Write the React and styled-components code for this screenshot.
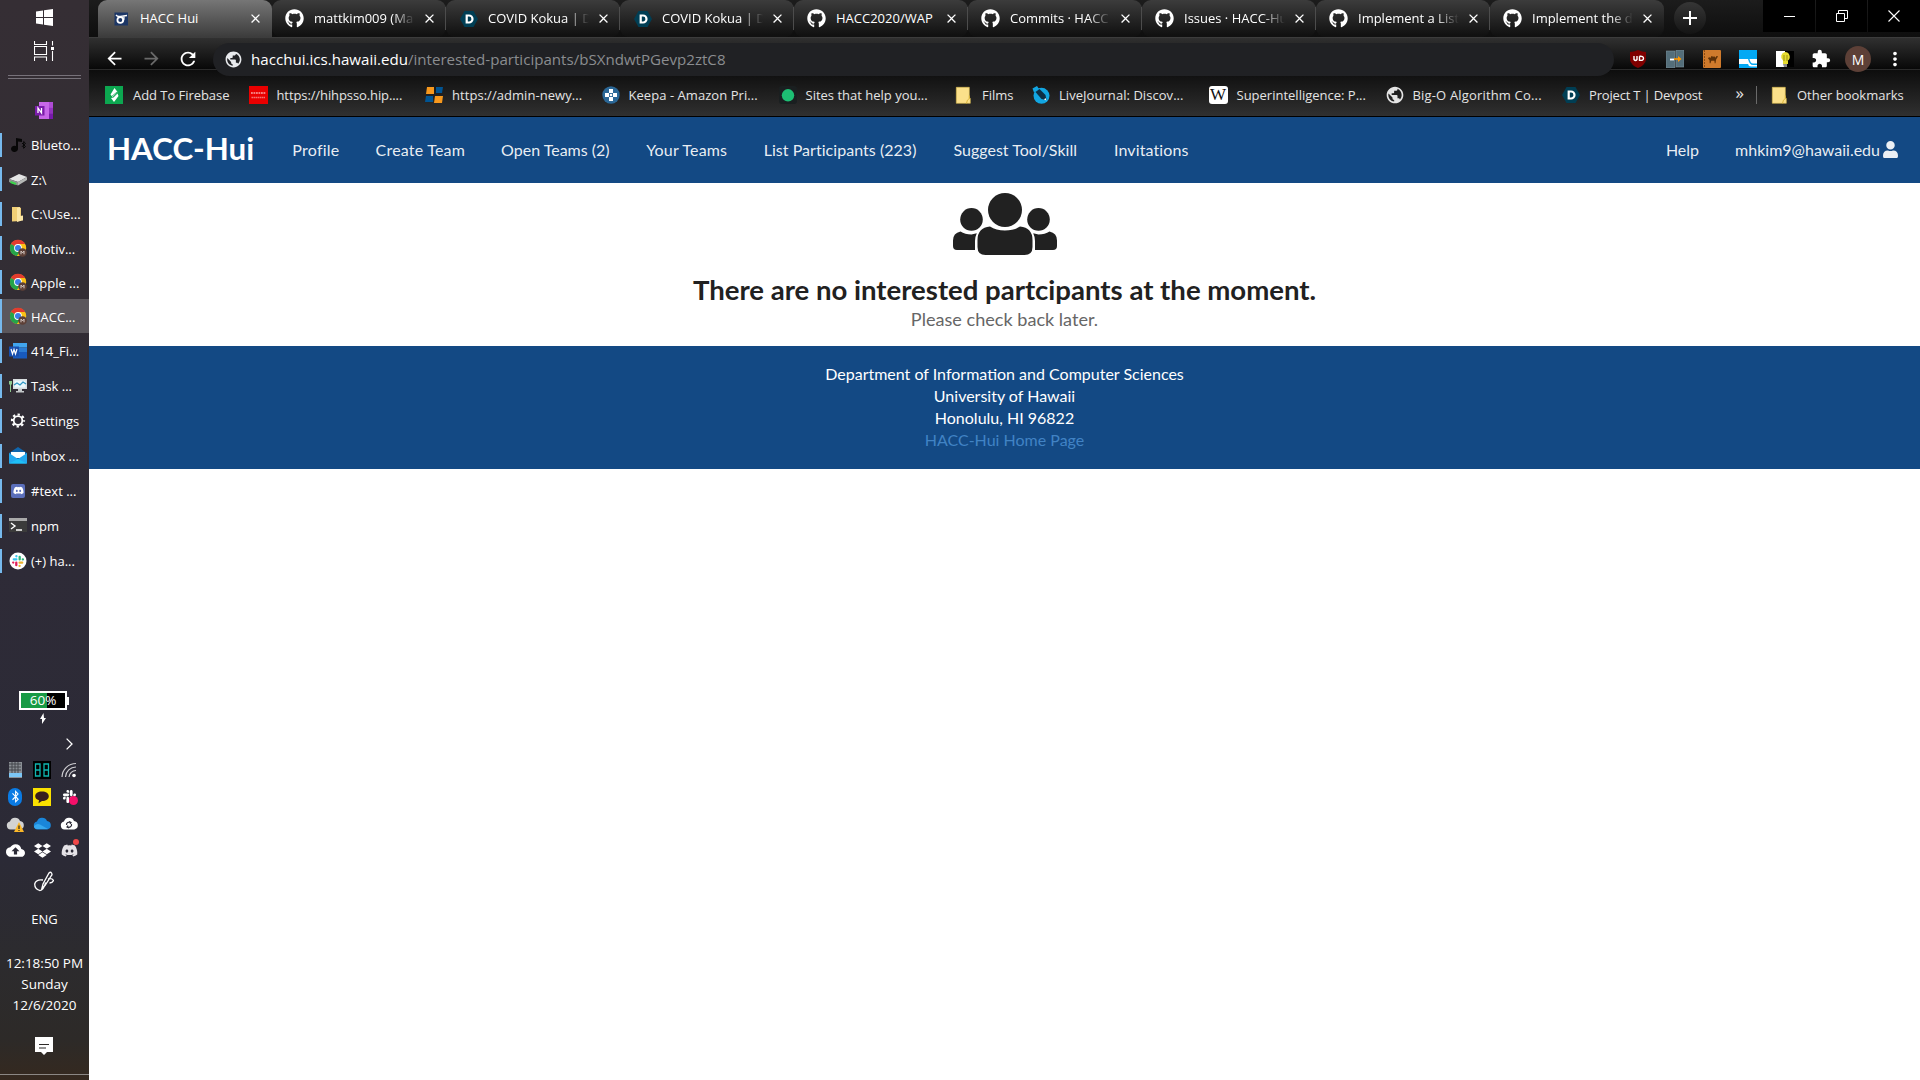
import React from "react";
import styled, { createGlobalStyle, css } from "styled-components";
import { FaGithub, FaUser, FaBluetoothB, FaDropbox, FaSlack, FaDiscord } from "react-icons/fa";
import { MdArrowBack, MdArrowForward, MdRefresh, MdPublic, MdClose, MdMoreVert, MdExtension, MdCloudUpload } from "react-icons/md";

const Global = createGlobalStyle`
  * { box-sizing: border-box; }
  html, body { margin: 0; height: 100%; background: #fff; overflow: hidden; }
  svg { display: block; flex: none; }
`;

const ui = css`
  font-family: "Open Sans", "Noto Sans", sans-serif;
`;

const Screen = styled.div`
  display: flex;
  width: 1920px;
  height: 1080px;
  overflow: hidden;
`;

/* ---------- Taskbar ---------- */
const Taskbar = styled.aside`
  ${ui}
  width: 89px;
  flex: none;
  display: flex;
  flex-direction: column;
  align-items: center;
  color: #fff;
  font-size: 13px;
  background: linear-gradient(#352e34 0, #322d34 300px, #2e2b37 560px, #2b2a36 860px, #2c2b2e 960px, #2d2a28 1040px, #35291f 1080px);
`;
const StartArea = styled.div`
  height: 127px;
  display: flex;
  flex-direction: column;
  align-items: center;
  padding: 9px 1px 0 0;
`;
const TaskViewSlot = styled.div`
  margin-top: 15px;
`;
const Grip = styled.div`
  width: 73px;
  height: 4px;
  margin-top: 14px;
  border-top: 1px solid #77727a;
  border-bottom: 1px solid #77727a;
`;
const PinnedSlot = styled.div`
  margin-top: 23px;
`;
const Task = styled.div`
  width: 89px;
  height: ${(p) => p.$h}px;
  flex: none;
  display: flex;
  align-items: center;
  background: ${(p) => (p.$active ? "#5b575c" : "transparent")};
`;
const Stripe = styled.div`
  width: 2px;
  height: ${(p) => (p.$active ? "34px" : "24px")};
  background: #76b9ed;
  margin-right: 7px;
`;
const TaskLabel = styled.span`
  margin: 1px 0 0 4px;
  white-space: nowrap;
`;
const Battery = styled.div`
  margin: 113px 0 0 -3px;
  width: 48px;
  height: 19px;
  border: 2px solid #fff;
  background: linear-gradient(90deg, #189a45 60%, #000 60%);
  text-align: center;
  line-height: 15px;
  font-size: 13.5px;
  position: relative;
  &::after {
    content: "";
    position: absolute;
    right: -4px;
    top: 4px;
    width: 2px;
    height: 8px;
    background: #fff;
  }
`;
const Bolt = styled.div`
  margin: 3px 0 0 -3px;
`;
const Chevron = styled.div`
  margin: 14px 0 0 50px;
`;
const Tray = styled.div`
  margin-top: 6px;
  margin-left: -5px;
  display: grid;
  grid-template-columns: repeat(3, 27px);
  grid-auto-rows: 27px;
  place-items: center;
`;
const PenSlot = styled.div`
  margin: 7px 0 0 -2px;
`;
const Lang = styled.div`
  margin-top: 17px;
  line-height: 20px;
`;
const Clock = styled.div`
  margin-top: 24px;
  font-size: 13.5px;
  line-height: 21px;
  text-align: center;
  white-space: nowrap;
`;
const NoteSlot = styled.div`
  margin: 21px 0 0 -2px;
`;
const Edge = styled.div`
  width: 89px;
  height: 1px;
  margin-top: 19px;
  background: #8b8784;
`;

/* ---------- Browser ---------- */
const Browser = styled.main`
  flex: 1;
  min-width: 0;
  display: flex;
  flex-direction: column;
`;
const TabStrip = styled.div`
  ${ui}
  height: 37px;
  display: flex;
  padding-left: 9px;
  background: linear-gradient(#1c1c1c, #0e0e0e);
`;
const Tab = styled.div`
  width: 174px;
  height: 37px;
  flex: none;
  display: flex;
  align-items: center;
  padding-left: 13px;
  color: #fff;
  font-size: 13px;
  border-radius: ${(p) => (p.$active ? "9px 9px 0 0" : "9px")};
  background: ${(p) => (p.$active ? "linear-gradient(#767676, #3c3c3c)" : "linear-gradient(#3c3c3c, #111 95%)")};
`;
const TabIcon = styled.div`
  width: 19px;
  display: grid;
  place-items: center;
`;
const TabTitle = styled.div`
  width: 103px;
  margin: 0 5px 1px 10px;
  white-space: nowrap;
  ${(p) => p.$fade && "mask-image: linear-gradient(90deg, #000 78px, transparent 101px);"}
`;
const TabDivider = styled.div`
  width: 1px;
  height: 23px;
  margin-left: 8px;
  background: ${(p) => (p.$hidden ? "transparent" : "#4c4c4c")};
`;
const NewTab = styled.div`
  width: 32px;
  height: 32px;
  margin: 2px 0 0 10px;
  border-radius: 50%;
  background: linear-gradient(#363636, #141414);
  display: grid;
  place-items: center;
`;
const WindowButtons = styled.div`
  margin-left: auto;
  display: flex;
  gap: 1px;
  height: 32px;
`;
const WinButton = styled.div`
  width: 51.6px;
  background: #000;
  display: grid;
  place-items: center;
`;
const Toolbar = styled.div`
  ${ui}
  height: 33px;
  flex: none;
  display: flex;
  align-items: flex-start;
  color: #fff;
  padding: 6px 0 0 13px;
  border-bottom: 1px solid #2b2b2b;
  background: linear-gradient(#484848 0, #303030 1px, #080808 32px);
`;
const NavButton = styled.div`
  height: 31px;
  width: 36.7px;
  padding-left: 2px;
  display: flex;
  align-items: center;
  color: ${(p) => (p.$dim ? "#6a6a6a" : "#fff")};
`;
const Address = styled.div`
  height: 33px;
  width: 1401px;
  flex: none;
  margin-left: 1px;
  border-radius: 17px;
  background: #202124;
  display: flex;
  align-items: center;
  padding-left: 11px;
  font-size: 15.1px;
  color: #8b8d90;
  white-space: nowrap;
  position: relative;
`;
const Url = styled.span`
  margin: 0 0 1px 8px;
  b { font-weight: 400; color: #fff; }
`;
const Extensions = styled.div`
  height: 32px;
  display: grid;
  grid-template-columns: repeat(8, 36.6px);
  place-items: center;
  margin-left: 6px;
`;
const Avatar = styled.div`
  width: 26px;
  height: 26px;
  border-radius: 50%;
  background: #5d4037;
  display: grid;
  place-items: center;
  font-size: 14px;
  position: relative;
`;
const Bookmarks = styled.div`
  ${ui}
  height: 47px;
  flex: none;
  display: flex;
  align-items: center;
  padding: 3px 16px 0 16px;
  color: #e4e4e4;
  font-size: 13px;
  border-bottom: 1px solid #000;
  background: linear-gradient(#0d0d0d, #303030);
`;
const Bookmark = styled.div`
  display: flex;
  align-items: center;
  gap: ${(p) => p.$gap || 9}px;
  width: ${(p) => p.$w}px;
  flex: none;
  white-space: nowrap;
  letter-spacing: ${(p) => p.$track || 0}px;
`;
const More = styled.div`
  margin: 0 13px 0 auto;
  display: flex;
  align-items: center;
  gap: 12px;
  font-size: 17px;
  line-height: 18px;
  span { margin-top: -4px; }
`;
const Rule = styled.div`
  width: 1px;
  height: 18px;
  flex: none;
  background: #6a6a6a;
`;

/* ---------- Site ---------- */
const Site = styled.div`
  flex: 1;
  font-family: Lato, sans-serif;
  font-size: 16px;
  line-height: 22px;
  background: #fff;
`;
const NavBar = styled.nav`
  height: 66px;
  display: flex;
  align-items: center;
  padding: 0 21px 0 18px;
  background: #134984;
  color: rgba(255, 255, 255, 0.92);
  white-space: nowrap;
`;
const Brand = styled.div`
  width: 185.3px;
  font-size: 31.3px;
  font-weight: 700;
  color: #fff;
  margin-top: -5px;
`;
const NavItem = styled.span`
  width: ${(p) => p.$w}px;
  letter-spacing: ${(p) => p.$track}px;
`;
const NavRight = styled.div`
  margin-left: auto;
  display: flex;
  gap: 36px;
`;
const Account = styled.div`
  display: flex;
  align-items: center;
  gap: 2px;
  svg { margin-top: -2px; }
`;
const Empty = styled.section`
  height: 163px;
  display: flex;
  flex-direction: column;
  align-items: center;
  padding-top: 10px;
`;
const Title = styled.h2`
  margin: 17px 0 0;
  font-size: 27.55px;
  line-height: 36px;
  color: #212121;
`;
const Sub = styled.div`
  font-size: 18.1px;
  line-height: 21px;
  color: #666;
  margin-top: 1px;
`;
const Footer = styled.footer`
  height: 123px;
  background: #134984;
  color: #fff;
  text-align: center;
  padding-top: 17px;
  a { color: #4183c4; display: block; }
`;

/* ---------- Icons ---------- */
const UsersIcon = () => (
  <svg width="104" height="62" viewBox="0 0 104 62" fill="#212121">
    <circle cx="52" cy="17" r="17" />
    <circle cx="18.500" cy="26.400" r="11.300" />
    <circle cx="85.500" cy="26.400" r="11.300" />
    <path d="M37 33.6Q43 37.5 52 37.5Q61 37.5 67 33.6Q79.500 35 79.500 47V54Q79.500 62 71.500 62H32.500Q24.500 62 24.500 54V47Q24.500 35 37 33.600Z" />
    <path d="M7.500 38.500Q12 41.500 18.500 41.500L23.800 40.300Q22 44 22 48V57H4Q0 57 0 53V47.500Q0 40 7.500 38.500Z" />
    <path d="M96.500 38.500Q92 41.500 85.500 41.500L80.200 40.300Q82 44 82 48V57H100Q104 57 104 53V47.500Q104 40 96.500 38.500Z" />
  </svg>
);
const DevpostIcon = () => (
  <svg width="18" height="18" viewBox="0 0 18 18">
    <path d="M4.500 1h9L18 9l-4.500 8h-9L0 9z" fill="#003e54" />
    <path d="M6.700 5.500H9a3.500 3.500 0 010 7H6.700z" fill="none" stroke="#fff" strokeWidth="2.200" />
  </svg>
);
const HaccIcon = () => (
  <svg width="18" height="18" viewBox="0 0 18 18">
    <rect x="2.500" y="2.500" width="13.500" height="13" fill="#1d3766" />
    <circle cx="8.300" cy="10" r="2.900" fill="none" stroke="#fff" strokeWidth="1.800" />
    <path d="M4 5q1.500 2 4.500 1.300L15 5.500M12 6.500q.5 3-1.500 5" stroke="#fff" strokeWidth="1.300" fill="none" />
  </svg>
);
const FirebaseAddIcon = () => (
  <svg width="18" height="18" viewBox="0 0 18 18">
    <rect width="18" height="18" fill="#0ca750" />
    <path d="M9.500 2l3 4-5 5-2-2.500zM12.500 7.500l1 2.500-4.500 6-3-4 2.500-.5z" fill="#fff" />
    <path d="M6 11l6-5" stroke="#0ca750" strokeWidth=".8" />
  </svg>
);
const OracleIcon = () => (
  <svg width="19" height="18" viewBox="0 0 19 18">
    <rect width="19" height="18" fill="#ea0000" />
    <path d="M2 7h15" stroke="#fff" strokeWidth="1.300" strokeDasharray="1.800 .7" opacity=".65" />
    <path d="M2.500 11.500h14" stroke="#fff" strokeWidth="1.300" strokeDasharray="1.400 .6" opacity=".5" />
  </svg>
);
const SquaresIcon = () => (
  <svg width="18" height="18" viewBox="0 0 18 18">
    <path d="M2 1h7v7H1z" fill="#f7981d" /><path d="M11 1h7l-1 6h-6z" fill="#005493" />
    <path d="M1 10h7v6H0z" fill="#005493" /><path d="M10 10h8l-1 7h-8z" fill="#f7981d" />
  </svg>
);
const KeepaIcon = () => (
  <svg width="18" height="18" viewBox="0 0 18 18">
    <circle cx="9" cy="9" r="8.700" fill="#2b6796" />
    <path d="M7 3h4v4h4v4h-4v4H7v-4H3V7h4z" fill="#fff" /><path d="M7 7h4v4H7z" fill="#2b6796" />
    <circle cx="9" cy="9" r="1.300" fill="#fff" />
  </svg>
);
const GreenDot = () => (
  <svg width="18" height="18" viewBox="0 0 18 18">
    <rect width="18" height="18" rx="3" fill="#1a1f20" /><circle cx="9" cy="9.300" r="6.200" fill="#1dbf73" />
  </svg>
);
const FolderIcon = () => (
  <svg width="18" height="18" viewBox="0 0 18 18">
    <path d="M2.300 1.300h13v11h1v5h-14z" fill="#fbe08a" stroke="#dcbc4c" strokeWidth=".6" />
    <path d="M12.500 17.300q.5-4 2.800-4.800v-3" stroke="#dcb73c" fill="none" />
  </svg>
);
const LiveJournalIcon = () => (
  <svg width="18" height="18" viewBox="0 0 18 18">
    <circle cx="9.500" cy="9.800" r="8" fill="#12a6e2" /><path d="M.5 2.500L5 0l2 3-5 3.500z" fill="#12a6e2" />
    <path d="M3.500 6l4-3 6 6 1 5-5-1z" fill="#0e2f45" />
    <path d="M12 13.500l1.500-1.500 1 2.500z" fill="#fff" />
  </svg>
);
const Wiki = styled.div`
  width: 19px;
  height: 18px;
  border-radius: 3px;
  background: #fff;
  color: #111;
  font: 17px/18px "Liberation Serif", serif;
  text-align: center;
`;
const WindowsIcon = () => (
  <svg width="17" height="17" viewBox="0 0 17 17" fill="#fff">
    <path d="M0 2.400l7-1v6.700H0zM8 1.200L17 0v8.100H8zM0 9.100h7v6.500l-7-1zM8 9.100h9V17l-9-1.300z" />
  </svg>
);
const TaskViewIcon = () => (
  <svg width="20" height="20" viewBox="0 0 20 20" fill="none" stroke="#fff" strokeWidth="1.100">
    <path d="M.5 0v3.500h12V0M.5 5.500h12v8H.5zM.5 20v-4h12v4M18.500 0v4.500M18.500 10v10" />
    <path d="M17 6h3v3h-3z" fill="#fff" stroke="none" />
  </svg>
);
const OneNoteIcon = () => (
  <svg width="18" height="17" viewBox="0 0 18 17">
    <path d="M4 0h14v17H4z" fill="#c767e8" /><path d="M14 0h4v5.600h-4z" fill="#ae4bd5" />
    <path d="M14 5.600h4v5.700h-4z" fill="#9332bf" /><path d="M14 11.300h4V17h-4z" fill="#7719aa" />
    <path d="M0 4h9.500v9.500H0z" fill="#7a1caa" /><path d="M3 11V6l3.500 5V6" fill="none" stroke="#fff" strokeWidth="1.300" />
  </svg>
);
const taskIcons = {
  music: <><path d="M7 2l6 1v3l-4-.5V13a3.500 3.200 0 11-2-3z" fill="#070707" /><path d="M13 7l3.500 3.500-1.800 1.800V5.500l1.800 1.800L13 10.800" stroke="#070707" fill="none" /></>,
  drive: <><path d="M0 9l10-5 8 3-9 5z" fill="#e4e4e4" /><path d="M0 9l9 3v3.500L0 12z" fill="#8f9592" /><path d="M9 12l9-5v3l-9 5.500z" fill="#b5b7b5" /><path d="M1.500 12l5.500 2" stroke="#3bd34b" strokeWidth="2" /></>,
  folder: <><path d="M3 2h7l2 1v13l-9 .5z" fill="#f1cf76" /><path d="M8 3l3-1v14l-3 1zM11 11l3-.5v5L11 16z" fill="#fbe6a5" /></>,
  chrome: <><circle cx="9" cy="9" r="8" fill="#e8a917" /><path d="M9 9L2 5A8 8 0 0116 5z" fill="#e33b2e" /><path d="M9 9L2 5a8 8 0 006 12l3-5z" fill="#25a44a" /><path d="M9 5h7A8 8 0 018 17l4-6z" fill="#fbc116" /><circle cx="9" cy="9" r="3.900" fill="#fff" /><circle cx="9" cy="9" r="3" fill="#3c7de6" /><circle cx="13.500" cy="13.500" r="4.300" fill="#5d4037" /><path d="M12 15.300v-3.200l1.500 1.700 1.500-1.700v3.200" stroke="#e6dcd8" strokeWidth=".9" fill="none" /></>,
  word: <><path d="M4 1h14v4.500H4z" fill="#41a5ee" /><path d="M4 5.500h14V10H4z" fill="#2b7cd3" /><path d="M4 10h14v6.500H4z" fill="#185abd" /><path d="M0 4.500h10v10H0z" fill="#184fae" /><path d="M2 7l1.500 5L5 7.500 6.500 12 8 7" stroke="#fff" strokeWidth="1.200" fill="none" /></>,
  task: <><path d="M4 2h14v10H4z" fill="#d8dde0" /><path d="M5.500 3.500h11v7h-11z" fill="#e9f7fc" /><path d="M5 8l3-2 3 2 3-3 3 2" stroke="#3197c4" fill="none" strokeWidth="1.300" /><path d="M9 12h4v2h2v1.500H7V14h2z" fill="#c5c9cb" /><path d="M0 4h3v3l-1 1v7H1V8L0 7z" fill="#8ec78f" /></>,
  gear: <g fill="none" stroke="#fff"><circle cx="9" cy="8.500" r="4.300" strokeWidth="1.800" /><circle cx="9" cy="8.500" r="6" strokeWidth="2.200" strokeDasharray="2.356 2.356" strokeDashoffset="1.178" /></g>,
  mail: <><path d="M0 6l9-6 9 6v10H0z" fill="#1066ad" /><path d="M2 5h14v6H2z" fill="#fff" /><path d="M0 6l9 6 9-6v10.500H0z" fill="#24a8ee" /><path d="M0 16.500L9 12l9 4.500z" fill="#1ec0f7" /></>,
  terminal: <><path d="M0 1h18v14H0z" fill="#3b3b3b" /><path d="M0 1h18v3H0z" fill="#a9a9a9" /><path d="M2 6l4 3-4 3M7 13h6" stroke="#fff" strokeWidth="1.400" fill="none" /></>,
  slack: <><circle cx="9" cy="9" r="8.500" fill="#fff" /><g fill="none" strokeWidth="2.300" strokeLinecap="round"><path d="M4.800 7.300h2.600M7.400 4.200v.1" stroke="#36c5f0" /><path d="M10.700 4.800v2.600M13.800 7.400h.1" stroke="#2eb67d" /><path d="M13.200 10.700h-2.600M10.600 13.800v.1" stroke="#ecb22e" /><path d="M7.300 13.200v-2.600M4.200 10.600h.1" stroke="#e01e5a" /></g></>,
};
const DiscordBox = styled.div`
  width: 14px;
  height: 14px;
  border-radius: 2px;
  background: #5b6fbb;
  color: #fff;
  display: grid;
  place-items: center;
`;
const TaskIcon = ({ name }) =>
  name === "discord" ? (
    <DiscordBox><FaDiscord size={11} /></DiscordBox>
  ) : (
    <svg width="18" height="18" viewBox="0 0 18 18">{taskIcons[name]}</svg>
  );
const IconSlot = styled.div`
  width: 18px;
  height: 20px;
  display: grid;
  place-items: center;
`;

const CloudShape = ({ fill }) => <path d="M4.500 14.500A4 4 0 014 6.600 5.300 5.300 0 0114 6a4.300 4.300 0 01.3 8.500z" fill={fill} />;
const Svg18 = ({ children }) => <svg width="18" height="18" viewBox="0 0 18 18">{children}</svg>;
const Kakao = styled.div`
  width: 18px;
  height: 18px;
  background: #fae100;
  display: grid;
  place-items: center;
`;
const BlueRound = styled.div`
  width: 14px;
  height: 18px;
  border-radius: 7px;
  background: #0a7be4;
  display: grid;
  place-items: center;
`;
const Badged = styled.div`
  position: relative;
  &::after {
    content: "";
    position: absolute;
    width: ${(p) => p.$s}px;
    height: ${(p) => p.$s}px;
    border-radius: 50%;
    background: ${(p) => p.$c};
    right: -1px;
    ${(p) => (p.$top ? "top: -3px" : "bottom: -1px")};
  }
`;

const tasks = [
  ["music", "Blueto...", 35], ["drive", "Z:\\", 34], ["folder", "C:\\Use...", 35], ["chrome", "Motiv...", 34],
  ["chrome", "Apple ...", 34], ["chrome", "HACC...", 34, true], ["word", "414_Fi...", 35], ["task", "Task ...", 35],
  ["gear", "Settings", 35], ["mail", "Inbox ...", 35], ["discord", "#text ...", 35], ["terminal", "npm", 35], ["slack", "(+) ha...", 35],
];
const tabs = [
  ["hacc", "HACC Hui"], ["gh", "mattkim009 (Ma", true], ["dev", "COVID Kokua | D", true], ["dev", "COVID Kokua | D", true],
  ["gh", "HACC2020/WAP"], ["gh", "Commits · HACC", true], ["gh", "Issues · HACC-Hu", true], ["gh", "Implement a List", true], ["gh", "Implement the d", true],
];
const tabIcon = { hacc: <HaccIcon />, gh: <FaGithub size={19} />, dev: <DevpostIcon /> };
const marks = [
  [<FirebaseAddIcon />, "Add To Firebase", 143.5, -0.05, 10], [<OracleIcon />, "https://hihpsso.hip....", 176.5, -0.1],
  [<SquaresIcon />, "https://admin-newy...", 176.5, 0.05], [<KeepaIcon />, "Keepa - Amazon Pri...", 177, 0.05],
  [<GreenDot />, "Sites that help you...", 175.5, 0], [<FolderIcon />, "Films", 78, 0, 10],
  [<LiveJournalIcon />, "LiveJournal: Discov...", 176.5, 0.05], [<Wiki>W</Wiki>, "Superintelligence: P...", 176, 0],
  [<MdPublic size={20} />, "Big-O Algorithm Co...", 177.5, 0.17, 8], [<DevpostIcon />, "Project T | Devpost", 150, -0.18],
];
const links = [
  ["Profile", 83.3, 0.25], ["Create Team", 125.5, 0.2], ["Open Teams (2)", 145.1, 0], ["Your Teams", 117.5, 0.17],
  ["List Participants (223)", 189.9, 0.04], ["Suggest Tool/Skill", 160.4, 0], ["Invitations", 90, 0.12],
];

export default function App() {
  return (
    <Screen>
      <Global />
      <Taskbar>
        <StartArea>
          <WindowsIcon />
          <TaskViewSlot><TaskViewIcon /></TaskViewSlot>
          <Grip />
          <PinnedSlot><OneNoteIcon /></PinnedSlot>
        </StartArea>
        {tasks.map(([icon, label, h, active]) => (
          <Task key={label} $h={h} $active={active}>
            <Stripe $active={active} />
            <IconSlot><TaskIcon name={icon} /></IconSlot>
            <TaskLabel>{label}</TaskLabel>
          </Task>
        ))}
        <Battery>60%</Battery>
        <Bolt><svg width="6" height="11" viewBox="0 0 6 11"><path d="M3.500 0L0 6h2v5l4-6H4z" fill="#fff" /></svg></Bolt>
        <Chevron><svg width="7" height="12" viewBox="0 0 7 12"><path d="M.6.600L6 6 .600 11.400" fill="none" stroke="#fff" strokeWidth="1.300" /></svg></Chevron>
        <Tray>
          <Svg18><path d="M3 1h13v16H3z" fill="#8a8f95" /><path d="M3 12h13v4H3z" fill="#7cc6f5" /><path d="M3 3h12M3 6h12M3 9h12M6 1v11M9 1v11M12 1v11" stroke="#44474d" strokeWidth="1" /></Svg18>
          <Svg18><path d="M0 0h18v18H0z" fill="#000" /><path d="M2.500 3h4.500v12H2.500zM2.500 9H7M11 3h4.500v12H11zM11 9h4.500" stroke="#0fb5b0" strokeWidth="1.300" fill="none" /></Svg18>
          <svg width="16" height="16" viewBox="0 0 16 16" fill="none" stroke="#cfced2" strokeWidth="1.200"><path d="M1 15A14 14 0 0115 1.500M4.500 15A10.500 10.500 0 0115 5M8 15a7 7 0 017-6.500" /><circle cx="13" cy="13.500" r="1.800" fill="#fff" stroke="none" /></svg>
          <BlueRound><FaBluetoothB size={13} /></BlueRound>
          <Kakao><svg width="14" height="14" viewBox="0 0 14 14"><path d="M7 1.500c4 0 6.800 2 6.800 4.700S11 11 7 11l-3.500 2.300.5-3C1.500 9.500.2 8 .2 6.200.2 3.500 3 1.500 7 1.500z" fill="#381e1e" /></svg></Kakao>
          <Badged $s={9} $c="#f5106a"><FaSlack size={15} /></Badged>
          <Svg18><CloudShape fill="#d3d3d3" /><path d="M13 7l5 10H8z" fill="#fbb829" /><path d="M13 10.500V14M13 15v1" stroke="#222" strokeWidth="1.200" /></Svg18>
          <Svg18><CloudShape fill="#1a86d9" /><path d="M1 11q3-3 6-1.500l8 4.500H4q-3-.5-3-3z" fill="#36a8ee" /></Svg18>
          <Svg18><CloudShape fill="#fff" /><path d="M6.500 10a2.600 2.600 0 014-2.500M11.500 9a2.600 2.600 0 01-4 2.800M9 6.500l2 1-1 1.500M9 13l-2-1 1-1.500" stroke="#2b2a36" strokeWidth="1.200" fill="none" /></Svg18>
          <MdCloudUpload size={19} />
          <FaDropbox size={17} />
          <Badged $s={6} $c="#f04747" $top><FaDiscord size={17} color="#e4e2e6" /></Badged>
        </Tray>
        <PenSlot><svg width="20" height="21" viewBox="0 0 20 21" fill="none" stroke="#fff" strokeWidth="1.300"><path d="M8 17l1-4 6-11q1.500-1.500 2.500 0t0 2.500l-6.500 10zM9 9q-7-1-8.300 4 0 5 5 6.500 4-.5 6-8M14 8q4-1 5.500 1.500-1 2.500-4 2.500" /></svg></PenSlot>
        <Lang>ENG</Lang>
        <Clock>
          <div>12:18:50 PM</div>
          <div>Sunday</div>
          <div>12/6/2020</div>
        </Clock>
        <NoteSlot><svg width="18" height="18" viewBox="0 0 18 18"><path d="M0 0h18v15h-6l-3 3-3-3H0z" fill="#fff" /><path d="M4 7.500h10M4 11h7" stroke="#2d2a28" strokeWidth="1.100" /></svg></NoteSlot>
        <Edge />
      </Taskbar>

      <Browser>
        <TabStrip>
          {tabs.map(([icon, title, fade], i) => (
            <Tab key={i} $active={i === 0}>
              <TabIcon>{tabIcon[icon]}</TabIcon>
              <TabTitle $fade={fade}>{title}</TabTitle>
              <MdClose size={15} />
              <TabDivider $hidden={i === 0 || i === tabs.length - 1} />
            </Tab>
          ))}
          <NewTab><svg width="14" height="14" viewBox="0 0 14 14"><path d="M7 0v14M0 7h14" stroke="#fff" strokeWidth="2" /></svg></NewTab>
          <WindowButtons>
            <WinButton><svg width="11" height="11" viewBox="0 0 11 11"><path d="M0 5.500h11" stroke="#fff" /></svg></WinButton>
            <WinButton><svg width="12" height="12" viewBox="0 0 12 12" fill="none" stroke="#fff"><path d="M.5 3.500h8v8h-8zM2.500 3V.500h9v8H9" /></svg></WinButton>
            <WinButton><svg width="12" height="12" viewBox="0 0 12 12"><path d="M.5.500l11 11M11.500.500l-11 11" stroke="#fff" strokeWidth="1.100" /></svg></WinButton>
          </WindowButtons>
        </TabStrip>
        <Toolbar>
          <NavButton><MdArrowBack size={21} /></NavButton>
          <NavButton $dim><MdArrowForward size={21} /></NavButton>
          <NavButton><MdRefresh size={22} /></NavButton>
          <Address>
            <MdPublic size={19} color="#e8eaed" />
            <Url><b>hacchui.ics.hawaii.edu</b>/interested-participants/bSXndwtPGevp2ztC8</Url>
          </Address>
          <Extensions>
            <Svg18><path d="M9 0q4 2 8 2v8q-1 5-8 8-7-3-8-8V2q4 0 8-2z" fill="#800000" /><path d="M5 6v3.500q1.500 2 3 0V6M10.500 6.300v4q4 .5 4-2t-4-2" stroke="#fff" strokeWidth="1.400" fill="none" /></Svg18>
            <Svg18><path d="M0 1h9v17H0zM10 0h8v17h-8z" fill="#546e7a" stroke="#7c929c" strokeWidth=".6" /><path d="M4 9.500h4" stroke="#fff" strokeWidth="1.800" /><path d="M8 9h5" stroke="#ff9800" strokeWidth="1.600" /><path d="M12 6l3.500 3-3.500 3z" fill="#ff9800" /></Svg18>
            <Svg18><rect width="18" height="18" rx="1" fill="#cf7a2c" /><path d="M1.500 0v18" stroke="#8b4a12" strokeDasharray="2 1" /><path d="M5 8.500q1-2 2.500-.5Q8.500 4.800 10 7q1.500-1.800 2.300.8L13.500 6l1.500.300-.5 1-1.500 2.500-.5 3.500h-.8l-.3-2.500H8.300L7.500 13.300h-.8L6.500 10z" fill="#5d3007" /></Svg18>
            <Svg18><path d="M0 0h18v18H0z" fill="#03a9f4" /><path d="M0 9h9q1.500 6 5 6h4v1.500h-6q-2.500 0-3-2.500H0z" fill="#fff" /><path d="M10.500 9H18v4.500h-4q-2.500 0-3.500-4.500z" fill="#fff" /></Svg18>
            <Svg18><path d="M0 1h9v16H0z" fill="#fff" /><path d="M9 1h9v16H9z" fill="#000" /><path d="M9 2a4.800 4.800 0 013 8.500V14H7v-3.500A4.800 4.800 0 019 2z" fill="#e6dc30" /><path d="M7 14h4v3H8z" fill="#8a8a8a" /><path d="M8 5v6M11 5v6" stroke="#9c9112" /></Svg18>
            <MdExtension size={20} />
            <Avatar>M</Avatar>
            <MdMoreVert size={22} />
          </Extensions>
        </Toolbar>
        <Bookmarks>
          {marks.map(([icon, text, w, track, gap]) => (
            <Bookmark key={text} $w={w} $track={track} $gap={gap}>{icon}<span>{text}</span></Bookmark>
          ))}
          <More><span>»</span><Rule /></More>
          <Bookmark $w={134}><FolderIcon /><span>Other bookmarks</span></Bookmark>
        </Bookmarks>
        <Site>
          <NavBar>
            <Brand>HACC-Hui</Brand>
            {links.map(([text, w, track]) => (
              <NavItem key={text} $w={w} $track={track}>{text}</NavItem>
            ))}
            <NavRight>
              <span>Help</span>
              <Account>mhkim9@hawaii.edu<FaUser size={17} /></Account>
            </NavRight>
          </NavBar>
          <Empty>
            <UsersIcon />
            <Title>There are no interested partcipants at the moment.</Title>
            <Sub>Please check back later.</Sub>
          </Empty>
          <Footer>
            <div>Department of Information and Computer Sciences</div>
            <div>University of Hawaii</div>
            <div>Honolulu, HI 96822</div>
            <a>HACC-Hui Home Page</a>
          </Footer>
        </Site>
      </Browser>
    </Screen>
  );
}
